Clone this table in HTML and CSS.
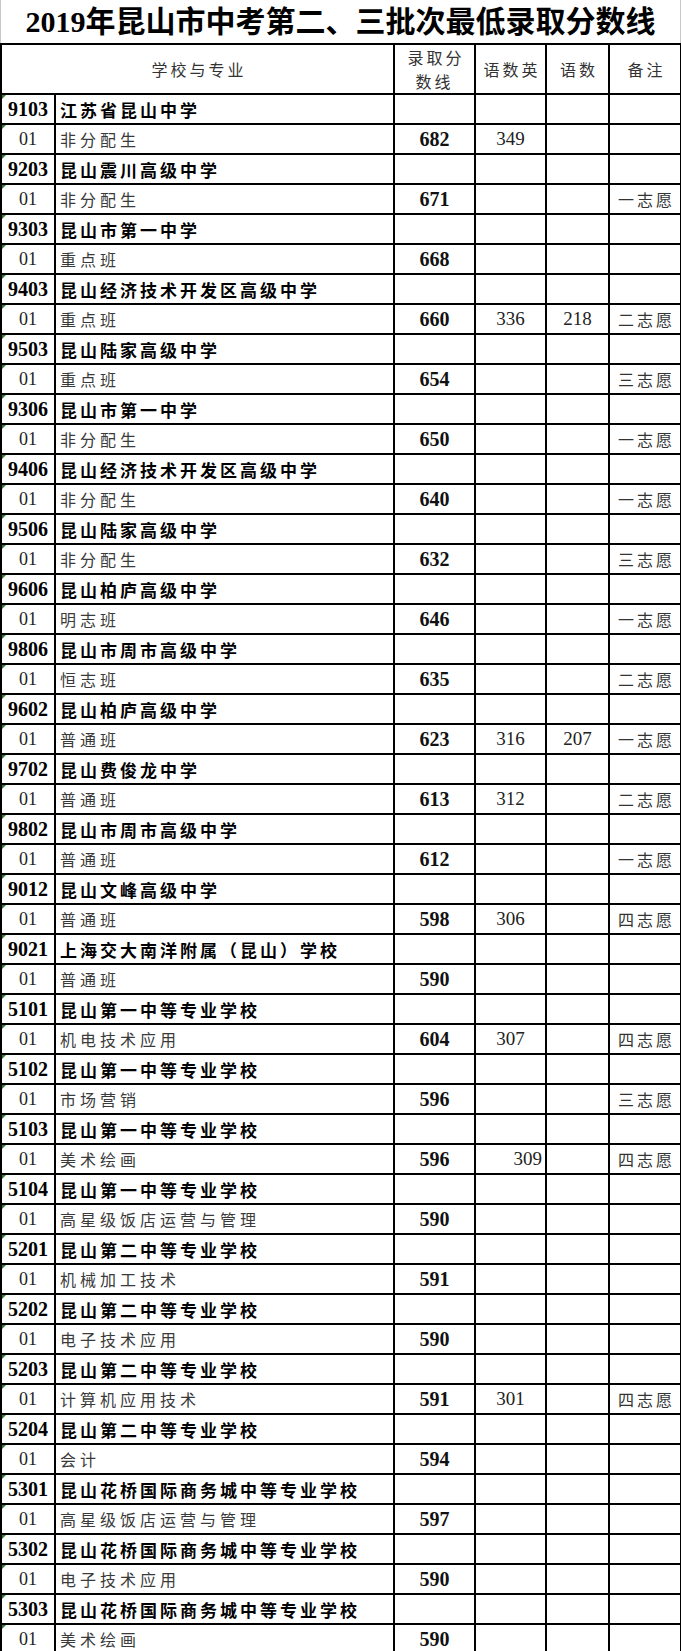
FILE: index.html
```html
<!DOCTYPE html>
<html lang="zh-CN">
<head>
<meta charset="utf-8">
<title>2019年昆山市中考第二、三批次最低录取分数线</title>
<link rel="stylesheet" href="styles.css">
</head>
<body>
<div class="sheet">
  <div class="title"><span class="yr">2019</span>年昆山市中考第二、三批次最低录取分数线</div>
  <table class="grid">
    <colgroup>
      <col class="c-code"><col class="c-name"><col class="c-score"><col class="c-a"><col class="c-b"><col class="c-note">
    </colgroup>
    <thead>
      <tr>
        <th colspan="2" class="hd">学校与专业</th>
        <th class="hd hd2">录取分<br>数线</th>
        <th class="hd">语数英</th>
        <th class="hd">语数</th>
        <th class="hd">备注</th>
      </tr>
    </thead>
    <tbody>
      <tr class="sch"><td class="code">9103</td><td class="name">江苏省昆山中学</td><td></td><td></td><td></td><td></td></tr>
      <tr class="maj"><td class="code">01</td><td class="name">非分配生</td><td class="score">682</td><td class="num">349</td><td></td><td></td></tr>
      <tr class="sch"><td class="code">9203</td><td class="name">昆山震川高级中学</td><td></td><td></td><td></td><td></td></tr>
      <tr class="maj"><td class="code">01</td><td class="name">非分配生</td><td class="score">671</td><td></td><td></td><td class="note">一志愿</td></tr>
      <tr class="sch"><td class="code">9303</td><td class="name">昆山市第一中学</td><td></td><td></td><td></td><td></td></tr>
      <tr class="maj"><td class="code">01</td><td class="name">重点班</td><td class="score">668</td><td></td><td></td><td></td></tr>
      <tr class="sch"><td class="code">9403</td><td class="name">昆山经济技术开发区高级中学</td><td></td><td></td><td></td><td></td></tr>
      <tr class="maj"><td class="code">01</td><td class="name">重点班</td><td class="score">660</td><td class="num">336</td><td class="num">218</td><td class="note">二志愿</td></tr>
      <tr class="sch"><td class="code">9503</td><td class="name">昆山陆家高级中学</td><td></td><td></td><td></td><td></td></tr>
      <tr class="maj"><td class="code">01</td><td class="name">重点班</td><td class="score">654</td><td></td><td></td><td class="note">三志愿</td></tr>
      <tr class="sch"><td class="code">9306</td><td class="name">昆山市第一中学</td><td></td><td></td><td></td><td></td></tr>
      <tr class="maj"><td class="code">01</td><td class="name">非分配生</td><td class="score">650</td><td></td><td></td><td class="note">一志愿</td></tr>
      <tr class="sch"><td class="code">9406</td><td class="name">昆山经济技术开发区高级中学</td><td></td><td></td><td></td><td></td></tr>
      <tr class="maj"><td class="code">01</td><td class="name">非分配生</td><td class="score">640</td><td></td><td></td><td class="note">一志愿</td></tr>
      <tr class="sch"><td class="code">9506</td><td class="name">昆山陆家高级中学</td><td></td><td></td><td></td><td></td></tr>
      <tr class="maj"><td class="code">01</td><td class="name">非分配生</td><td class="score">632</td><td></td><td></td><td class="note">三志愿</td></tr>
      <tr class="sch"><td class="code">9606</td><td class="name">昆山柏庐高级中学</td><td></td><td></td><td></td><td></td></tr>
      <tr class="maj"><td class="code">01</td><td class="name">明志班</td><td class="score">646</td><td></td><td></td><td class="note">一志愿</td></tr>
      <tr class="sch"><td class="code">9806</td><td class="name">昆山市周市高级中学</td><td></td><td></td><td></td><td></td></tr>
      <tr class="maj"><td class="code">01</td><td class="name">恒志班</td><td class="score">635</td><td></td><td></td><td class="note">二志愿</td></tr>
      <tr class="sch"><td class="code">9602</td><td class="name">昆山柏庐高级中学</td><td></td><td></td><td></td><td></td></tr>
      <tr class="maj"><td class="code">01</td><td class="name">普通班</td><td class="score">623</td><td class="num">316</td><td class="num">207</td><td class="note">一志愿</td></tr>
      <tr class="sch"><td class="code">9702</td><td class="name">昆山费俊龙中学</td><td></td><td></td><td></td><td></td></tr>
      <tr class="maj"><td class="code">01</td><td class="name">普通班</td><td class="score">613</td><td class="num">312</td><td></td><td class="note">二志愿</td></tr>
      <tr class="sch"><td class="code">9802</td><td class="name">昆山市周市高级中学</td><td></td><td></td><td></td><td></td></tr>
      <tr class="maj"><td class="code">01</td><td class="name">普通班</td><td class="score">612</td><td></td><td></td><td class="note">一志愿</td></tr>
      <tr class="sch"><td class="code">9012</td><td class="name">昆山文峰高级中学</td><td></td><td></td><td></td><td></td></tr>
      <tr class="maj"><td class="code">01</td><td class="name">普通班</td><td class="score">598</td><td class="num">306</td><td></td><td class="note">四志愿</td></tr>
      <tr class="sch"><td class="code">9021</td><td class="name">上海交大南洋附属（昆山）学校</td><td></td><td></td><td></td><td></td></tr>
      <tr class="maj"><td class="code">01</td><td class="name">普通班</td><td class="score">590</td><td></td><td></td><td></td></tr>
      <tr class="sch"><td class="code">5101</td><td class="name">昆山第一中等专业学校</td><td></td><td></td><td></td><td></td></tr>
      <tr class="maj"><td class="code">01</td><td class="name">机电技术应用</td><td class="score">604</td><td class="num">307</td><td></td><td class="note">四志愿</td></tr>
      <tr class="sch"><td class="code">5102</td><td class="name">昆山第一中等专业学校</td><td></td><td></td><td></td><td></td></tr>
      <tr class="maj"><td class="code">01</td><td class="name">市场营销</td><td class="score">596</td><td></td><td></td><td class="note">三志愿</td></tr>
      <tr class="sch"><td class="code">5103</td><td class="name">昆山第一中等专业学校</td><td></td><td></td><td></td><td></td></tr>
      <tr class="maj"><td class="code">01</td><td class="name">美术绘画</td><td class="score">596</td><td class="num right">309</td><td></td><td class="note">四志愿</td></tr>
      <tr class="sch"><td class="code">5104</td><td class="name">昆山第一中等专业学校</td><td></td><td></td><td></td><td></td></tr>
      <tr class="maj"><td class="code">01</td><td class="name">高星级饭店运营与管理</td><td class="score">590</td><td></td><td></td><td></td></tr>
      <tr class="sch"><td class="code">5201</td><td class="name">昆山第二中等专业学校</td><td></td><td></td><td></td><td></td></tr>
      <tr class="maj"><td class="code">01</td><td class="name">机械加工技术</td><td class="score">591</td><td></td><td></td><td></td></tr>
      <tr class="sch"><td class="code">5202</td><td class="name">昆山第二中等专业学校</td><td></td><td></td><td></td><td></td></tr>
      <tr class="maj"><td class="code">01</td><td class="name">电子技术应用</td><td class="score">590</td><td></td><td></td><td></td></tr>
      <tr class="sch"><td class="code">5203</td><td class="name">昆山第二中等专业学校</td><td></td><td></td><td></td><td></td></tr>
      <tr class="maj"><td class="code">01</td><td class="name">计算机应用技术</td><td class="score">591</td><td class="num">301</td><td></td><td class="note">四志愿</td></tr>
      <tr class="sch"><td class="code">5204</td><td class="name">昆山第二中等专业学校</td><td></td><td></td><td></td><td></td></tr>
      <tr class="maj"><td class="code">01</td><td class="name">会计</td><td class="score">594</td><td></td><td></td><td></td></tr>
      <tr class="sch"><td class="code">5301</td><td class="name">昆山花桥国际商务城中等专业学校</td><td></td><td></td><td></td><td></td></tr>
      <tr class="maj"><td class="code">01</td><td class="name">高星级饭店运营与管理</td><td class="score">597</td><td></td><td></td><td></td></tr>
      <tr class="sch"><td class="code">5302</td><td class="name">昆山花桥国际商务城中等专业学校</td><td></td><td></td><td></td><td></td></tr>
      <tr class="maj"><td class="code">01</td><td class="name">电子技术应用</td><td class="score">590</td><td></td><td></td><td></td></tr>
      <tr class="sch"><td class="code">5303</td><td class="name">昆山花桥国际商务城中等专业学校</td><td></td><td></td><td></td><td></td></tr>
      <tr class="maj"><td class="code">01</td><td class="name">美术绘画</td><td class="score">590</td><td></td><td></td><td></td></tr>
    </tbody>
  </table>
</div>
</body>
</html>
```

FILE: styles.css
```css
html, body {
  margin: 0;
  padding: 0;
  background: #fff;
}

.sheet {
  width: 681px;
}

.title {
  height: 43px;
  line-height: 44px;
  text-align: center;
  font-family: "Liberation Serif", "Noto Sans CJK SC", serif;
  font-weight: 700;
  font-size: 30px;
  color: #000;
  border-left: 1px solid #c8c8c8;
  border-right: 1px solid #c8c8c8;
  box-sizing: border-box;
  white-space: nowrap;
}

.title .yr {
  font-weight: 700;
}

.grid {
  border-collapse: collapse;
  table-layout: fixed;
  width: 680px;
}

.c-code { width: 54px; }
.c-name { width: 339px; }
.c-score { width: 81px; }
.c-a { width: 71px; }
.c-b { width: 63px; }
.c-note { width: 72px; }

.grid th,
.grid td {
  border: 2px solid #000;
  padding: 0;
  overflow: hidden;
  white-space: nowrap;
}

.grid td {
  height: 28px;
}

.hd {
  height: 46px;
  font-family: "Noto Sans CJK SC", sans-serif;
  font-weight: 400;
  font-size: 16px;
  letter-spacing: 3px;
  text-indent: 3px;
  color: #333;
  text-align: center;
  vertical-align: middle;
}

.hd2 {
  line-height: 24px;
  padding-top: 2px;
}

.code {
  position: relative;
  text-align: center;
  font-family: "Liberation Serif", serif;
  color: #000;
}

.code::before {
  content: "";
  position: absolute;
  top: 0;
  left: 0;
  width: 0;
  height: 0;
  border-top: 4px solid #2e7d32;
  border-right: 4px solid transparent;
}

.sch .code {
  font-weight: 700;
  font-size: 20px;
}

.maj .code {
  font-weight: 400;
  font-size: 18px;
  color: #222;
}

.name {
  padding-left: 4px !important;
  font-family: "Noto Sans CJK SC", sans-serif;
  font-size: 16px;
}

.sch .name {
  font-weight: 700;
  font-size: 17px;
  letter-spacing: 3px;
  color: #000;
}

.maj .name {
  font-weight: 400;
  letter-spacing: 4px;
  color: #3a3a3a;
}

.score {
  text-align: center;
  font-family: "Liberation Serif", serif;
  font-weight: 700;
  font-size: 20px;
  color: #111;
}

.num {
  text-align: center;
  font-family: "Liberation Serif", serif;
  font-weight: 400;
  font-size: 19px;
  color: #222;
}

.num.right {
  text-align: right;
  padding-right: 3px !important;
}

.note {
  text-align: center;
  font-family: "Noto Sans CJK SC", sans-serif;
  font-size: 16px;
  letter-spacing: 3px;
  text-indent: 3px;
  color: #333;
}
```
